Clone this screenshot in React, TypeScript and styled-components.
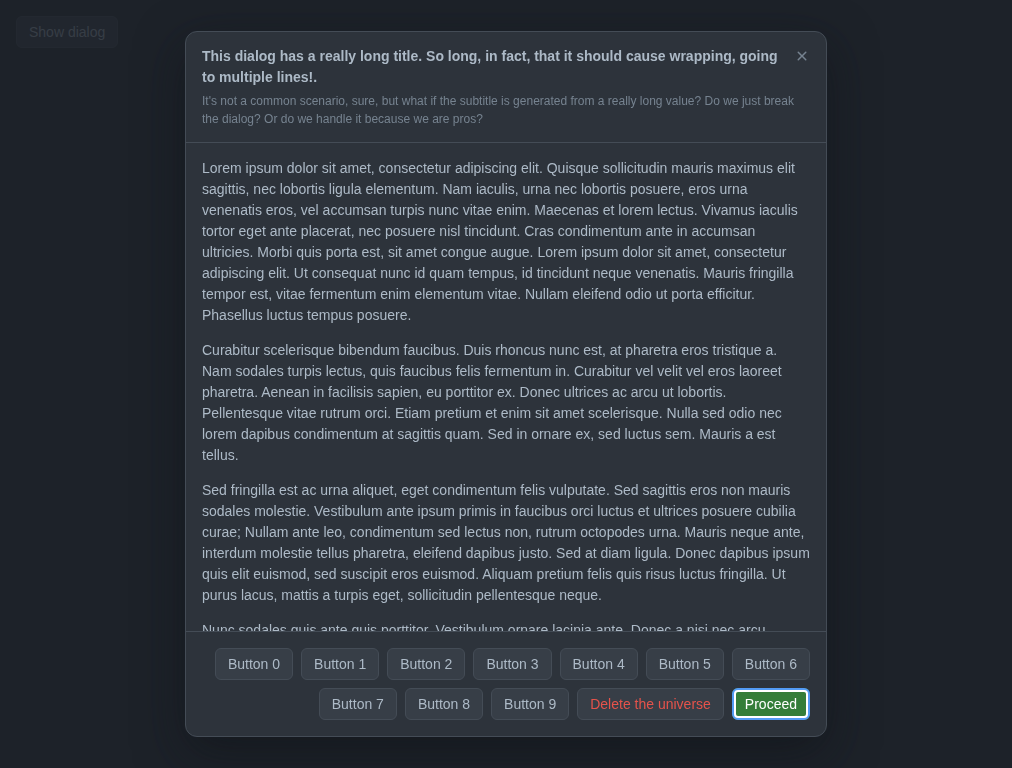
import React from "react";
import styled, { createGlobalStyle } from "styled-components";

const Global = createGlobalStyle`
  html, body { margin: 0; padding: 0; }
  body {
    background: #22272e;
    color: #adbac7;
    font-family: "Liberation Sans", Arial, sans-serif;
    font-size: 14px;
    line-height: 1.5;
  }
  * { box-sizing: border-box; }
`;

const Page = styled.div`
  padding: 16px;
  min-height: 100vh;
`;

const Button = styled.button<{ $variant?: "default" | "danger" | "primary"; $focused?: boolean }>`
  height: 32px;
  padding: 0 12px;
  border-radius: 6px;
  font-family: inherit;
  font-size: 14px;
  font-weight: 400;
  line-height: 20px;
  white-space: nowrap;
  cursor: pointer;
  border: 1px solid ${(p) => (p.$variant === "primary" ? "rgba(205,217,229,0.1)" : "#444c56")};
  background: ${(p) => (p.$variant === "primary" ? "#347d39" : "#373e47")};
  color: ${(p) => (p.$variant === "primary" ? "#ffffff" : p.$variant === "danger" ? "#e5534b" : "#adbac7")};
  ${(p) =>
    p.$focused
      ? `outline: 2px solid #539bf5; outline-offset: -2px; box-shadow: inset 0 0 0 3px #ffffff;`
      : ``}
`;

const Backdrop = styled.div`
  position: fixed;
  inset: 0;
  background: rgba(28, 33, 40, 0.82);
  display: flex;
  align-items: center;
  justify-content: center;
`;

const Dialog = styled.div`
  width: 642px;
  height: calc(100vh - 62px);
  display: flex;
  flex-direction: column;
  background: #2d333b;
  border: 1px solid #444c56;
  border-radius: 12px;
  box-shadow: 0 16px 48px rgba(17, 20, 25, 0.6);
  overflow: hidden;
`;

const Header = styled.div`
  display: flex;
  align-items: flex-start;
  padding: 14px 16px;
  border-bottom: 1px solid #444c56;
  flex-shrink: 0;
`;

const TitleArea = styled.div`
  flex: 1 1 auto;
  min-width: 0;
`;

const Title = styled.h1`
  margin: 0;
  font-size: 14px;
  font-weight: 700;
  line-height: 21px;
  color: #adbac7;
`;

const Subtitle = styled.h2`
  margin: 4px 0 0;
  font-size: 12px;
  font-weight: 400;
  line-height: 18px;
  color: #768390;
`;

const CloseButton = styled.button`
  flex: 0 0 16px;
  width: 16px;
  height: 20px;
  display: flex;
  align-items: center;
  justify-content: center;
  border: 0;
  padding: 0;
  background: transparent;
  color: #768390;
  cursor: pointer;
`;

const Body = styled.div`
  flex: 1 1 auto;
  min-height: 0;
  overflow: auto;
  scrollbar-width: none;
  padding: 15px 16px 16px;
  &::-webkit-scrollbar { display: none; }
`;

const Para = styled.p`
  margin: 0 0 14px;
  font-size: 14px;
  line-height: 21px;
  color: #adbac7;
`;

const Footer = styled.div`
  flex-shrink: 0;
  display: flex;
  flex-wrap: wrap;
  justify-content: flex-end;
  gap: 8px;
  padding: 16px;
  border-top: 1px solid #444c56;
`;

const XIcon = () => (
  <svg width="16" height="16" viewBox="0 0 16 16" fill="currentColor" aria-hidden="true">
    <path d="M3.72 3.72a.75.75 0 0 1 1.06 0L8 6.94l3.22-3.22a.749.749 0 0 1 1.275.326.749.749 0 0 1-.215.734L9.06 8l3.22 3.22a.749.749 0 0 1-.326 1.275.749.749 0 0 1-.734-.215L8 9.06l-3.22 3.22a.751.751 0 0 1-1.042-.018.751.751 0 0 1-.018-1.042L6.94 8 3.72 4.78a.75.75 0 0 1 0-1.06Z" />
  </svg>
);

const paragraphs = [
  "Lorem ipsum dolor sit amet, consectetur adipiscing elit. Quisque sollicitudin mauris maximus elit sagittis, nec lobortis ligula elementum. Nam iaculis, urna nec lobortis posuere, eros urna venenatis eros, vel accumsan turpis nunc vitae enim. Maecenas et lorem lectus. Vivamus iaculis tortor eget ante placerat, nec posuere nisl tincidunt. Cras condimentum ante in accumsan ultricies. Morbi quis porta est, sit amet congue augue. Lorem ipsum dolor sit amet, consectetur adipiscing elit. Ut consequat nunc id quam tempus, id tincidunt neque venenatis. Mauris fringilla tempor est, vitae fermentum enim elementum vitae. Nullam eleifend odio ut porta efficitur. Phasellus luctus tempus posuere.",
  "Curabitur scelerisque bibendum faucibus. Duis rhoncus nunc est, at pharetra eros tristique a. Nam sodales turpis lectus, quis faucibus felis fermentum in. Curabitur vel velit vel eros laoreet pharetra. Aenean in facilisis sapien, eu porttitor ex. Donec ultrices ac arcu ut lobortis. Pellentesque vitae rutrum orci. Etiam pretium et enim sit amet scelerisque. Nulla sed odio nec lorem dapibus condimentum at sagittis quam. Sed in ornare ex, sed luctus sem. Mauris a est tellus.",
  "Sed fringilla est ac urna aliquet, eget condimentum felis vulputate. Sed sagittis eros non mauris sodales molestie. Vestibulum ante ipsum primis in faucibus orci luctus et ultrices posuere cubilia curae; Nullam ante leo, condimentum sed lectus non, rutrum octopodes urna. Mauris neque ante, interdum molestie tellus pharetra, eleifend dapibus justo. Sed at diam ligula. Donec dapibus ipsum quis elit euismod, sed suscipit eros euismod. Aliquam pretium felis quis risus luctus fringilla. Ut purus lacus, mattis a turpis eget, sollicitudin pellentesque neque.",
  "Nunc sodales quis ante quis porttitor. Vestibulum ornare lacinia ante. Donec a nisi nec arcu",
];

export default function App() {
  const buttons = Array.from({ length: 10 }, (_, i) => `Button ${i}`);
  return (
    <>
      <Global />
      <Page>
        <Button>Show dialog</Button>
      </Page>
      <Backdrop>
        <Dialog role="dialog">
          <Header>
            <TitleArea>
              <Title>
                This dialog has a really long title. So long, in fact, that it should cause wrapping, going to multiple lines!.
              </Title>
              <Subtitle>
                It's not a common scenario, sure, but what if the subtitle is generated from a really long value? Do we just break the dialog? Or do we handle it because we are pros?
              </Subtitle>
            </TitleArea>
            <CloseButton aria-label="Close">
              <XIcon />
            </CloseButton>
          </Header>
          <Body>
            {paragraphs.map((t, i) => (
              <Para key={i}>{t}</Para>
            ))}
          </Body>
          <Footer>
            {buttons.map((b) => (
              <Button key={b}>{b}</Button>
            ))}
            <Button $variant="danger">Delete the universe</Button>
            <Button $variant="primary" $focused>
              Proceed
            </Button>
          </Footer>
        </Dialog>
      </Backdrop>
    </>
  );
}
